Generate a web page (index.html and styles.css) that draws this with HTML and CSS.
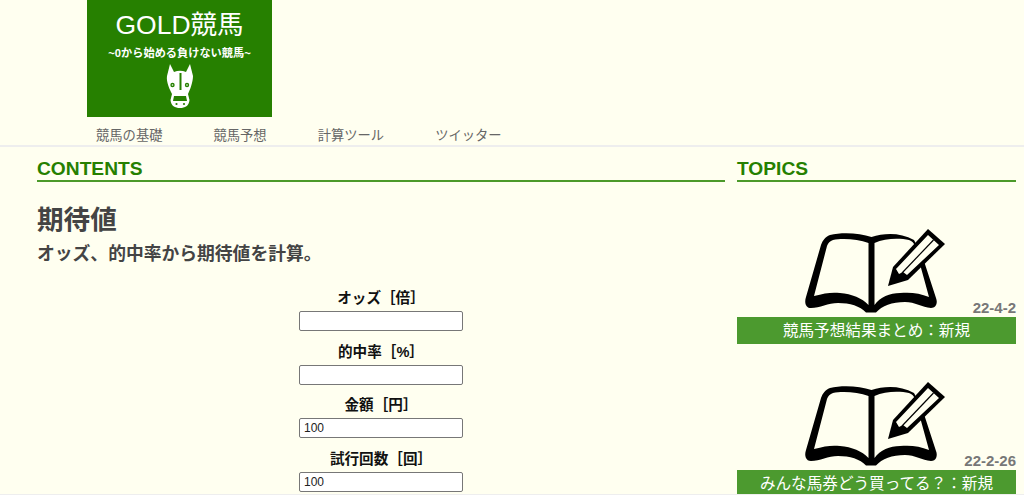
FILE: index.html
```html
<!DOCTYPE html>
<html lang="ja">
<head>
<meta charset="utf-8">
<title>期待値</title>
<link rel="stylesheet" href="styles.css">
</head>
<body>
<svg class="defs" width="0" height="0" aria-hidden="true">
  <symbol id="book" viewBox="0 0 150 92">
    <path fill="#000" d="M71.5 12C60 8 42 7 30 10C25 12 23 15 21 20L6 72C4 78 6 83 11 83C20 83 28 78 38 78C50 78 60 81 66 87.5H76C82 81 92 77 105 77C115 77 122 82 131 83C136 83 138 78 136 73L122 30L114 15C100 7 84 8 71.5 12Z"/>
    <path fill="#fffff0" d="M68.5 18C58 14 42 13 33 15C30 16 28 18 27 21L14 71C25 68 32 67 40 68C52 69 62 73 68.5 80Z"/>
    <path fill="#fffff0" d="M74.5 18C85 13 100 13 109 15C112 16 114 18 115 21L129 72C120 68 110 67 100 68C90 68 80 72 74.5 80Z"/>
    <path fill="#000" d="M88 61L93 42L128 4L145 19L108 55Z"/>
    <path fill="#fffff0" d="M96 44L128 10L139 20L107 50L103 47L99 49Z"/>
    <path fill="none" stroke="#000" stroke-width="1.2" d="M102 48L133.500 15"/>
  </symbol>
</svg>
<header class="site-header">
  <div class="logo">
    <div class="logo-title">GOLD競馬</div>
    <div class="logo-sub">~0から始める負けない競馬~</div>
    <svg class="horse" viewBox="0 0 50 52" width="50" height="52" aria-hidden="true">
      <path fill="#fff" d="M15 4L19 12Q25 9.500 31 12L35 4L38 16C38 22 35 30 33 34L34.500 40C34 46 30 48 25 48C20 48 16 46 15.500 40L17 34C15 30 11 22 12 16Z"/>
      <path fill="#268000" d="M24.500 13H26.500V30H24.500Z"/>
      <circle cx="17.500" cy="25" r="2.200" fill="#268000"/><circle cx="32" cy="25" r="2.200" fill="#268000"/>
      <circle cx="17.500" cy="25" r=".8" fill="#fff"/><circle cx="32" cy="25" r=".8" fill="#fff"/>
      <path fill="#268000" d="M19 36H31L32 41H18Z"/>
      <circle cx="21.500" cy="44" r="1.100" fill="#268000"/><circle cx="29" cy="44" r="1.100" fill="#268000"/>
    </svg>
  </div>
  <nav class="nav">
    <a>競馬の基礎</a><a>競馬予想</a><a>計算ツール</a><a>ツイッター</a>
  </nav>
</header>
<div class="layout">
  <main class="main">
    <h2 class="section-title">CONTENTS</h2>
    <h1 class="page-title">期待値</h1>
    <p class="lead">オッズ、的中率から期待値を計算。</p>
    <form class="calc">
      <label>オッズ［倍］</label><input type="text">
      <label>的中率［%］</label><input type="text">
      <label>金額［円］</label><input type="text" value="100">
      <label>試行回数［回］</label><input type="text" value="100">
    </form>
  </main>
  <aside class="side">
    <h2 class="section-title">TOPICS</h2>
    <article class="topic">
      <svg class="book" aria-hidden="true"><use href="#book"/></svg>
      <div class="date">22-4-2</div>
      <div class="topic-title">競馬予想結果まとめ：新規</div>
    </article>
    <article class="topic">
      <svg class="book" aria-hidden="true"><use href="#book"/></svg>
      <div class="date">22-2-26</div>
      <div class="topic-title">みんな馬券どう買ってる？：新規</div>
    </article>
  </aside>
</div>
</body>
</html>
```
FILE: styles.css
```css
* { box-sizing: border-box; }
html, body { height: 495px; overflow: hidden; }
body {
  margin: 0;
  background: #fffff0;
  color: #444;
  border-bottom: 1px solid #eeeeee;
  font-family: "Liberation Sans", "Noto Sans CJK JP", sans-serif;
}
.defs { position: absolute; }
.site-header { height: 147px; border-bottom: 2px solid #eeeeee; padding-left: 87px; }
.logo {
  width: 185px; height: 117px; background: #268000; color: #fff;
  display: flex; flex-direction: column; align-items: center;
}
.logo-title { font-size: 26.500px; line-height: 30px; margin-top: 10px; }
.logo-sub { font-size: 11.200px; line-height: 14px; font-weight: bold; margin-top: 6px; }
.horse { flex: none; }
.nav { display: flex; gap: 51px; padding: 10px 0 0 9px; font-size: 13.300px; line-height: 18px; color: #666; }
.layout { display: flex; padding-left: 37px; }
.main { width: 688px; }
.side { width: 279px; margin-left: 12px; }
.section-title {
  margin: 11px 0 0; height: 24px; font-size: 19.200px; line-height: 22px; font-weight: bold;
  color: #268000; border-bottom: 2px solid #4c9a2a;
}
.page-title { margin: 24px 0 0; font-size: 26.600px; line-height: 28px; font-weight: bold; color: #444; }
.lead { margin: 9px 0 0; font-size: 17.800px; line-height: 22px; font-weight: bold; color: #444; }
.calc { display: flex; flex-direction: column; align-items: center; margin-top: 24px; }
.calc label { font-size: 14.600px; line-height: 18px; font-weight: bold; color: #111; margin-bottom: 4px; }
.calc input {
  width: 164px; height: 20px; margin-bottom: 11.670px; padding: 1px 4px;
  font: 12px "Liberation Sans", sans-serif; color: #222; background: #fff;
  border: 1px solid #777; border-radius: 2px;
}
.topic { position: relative; height: 153px; padding-top: 43px; }
.book { display: block; width: 150px; height: 92px; margin-left: 63px; }
.date {
  position: absolute; right: 0; top: 118px;
  font-size: 15px; line-height: 16px; font-weight: bold; color: #777;
}
.topic-title {
  height: 27px; background: #4c9a2f; color: #fff; text-align: center;
  font-size: 15.600px; line-height: 27px;
}
```
